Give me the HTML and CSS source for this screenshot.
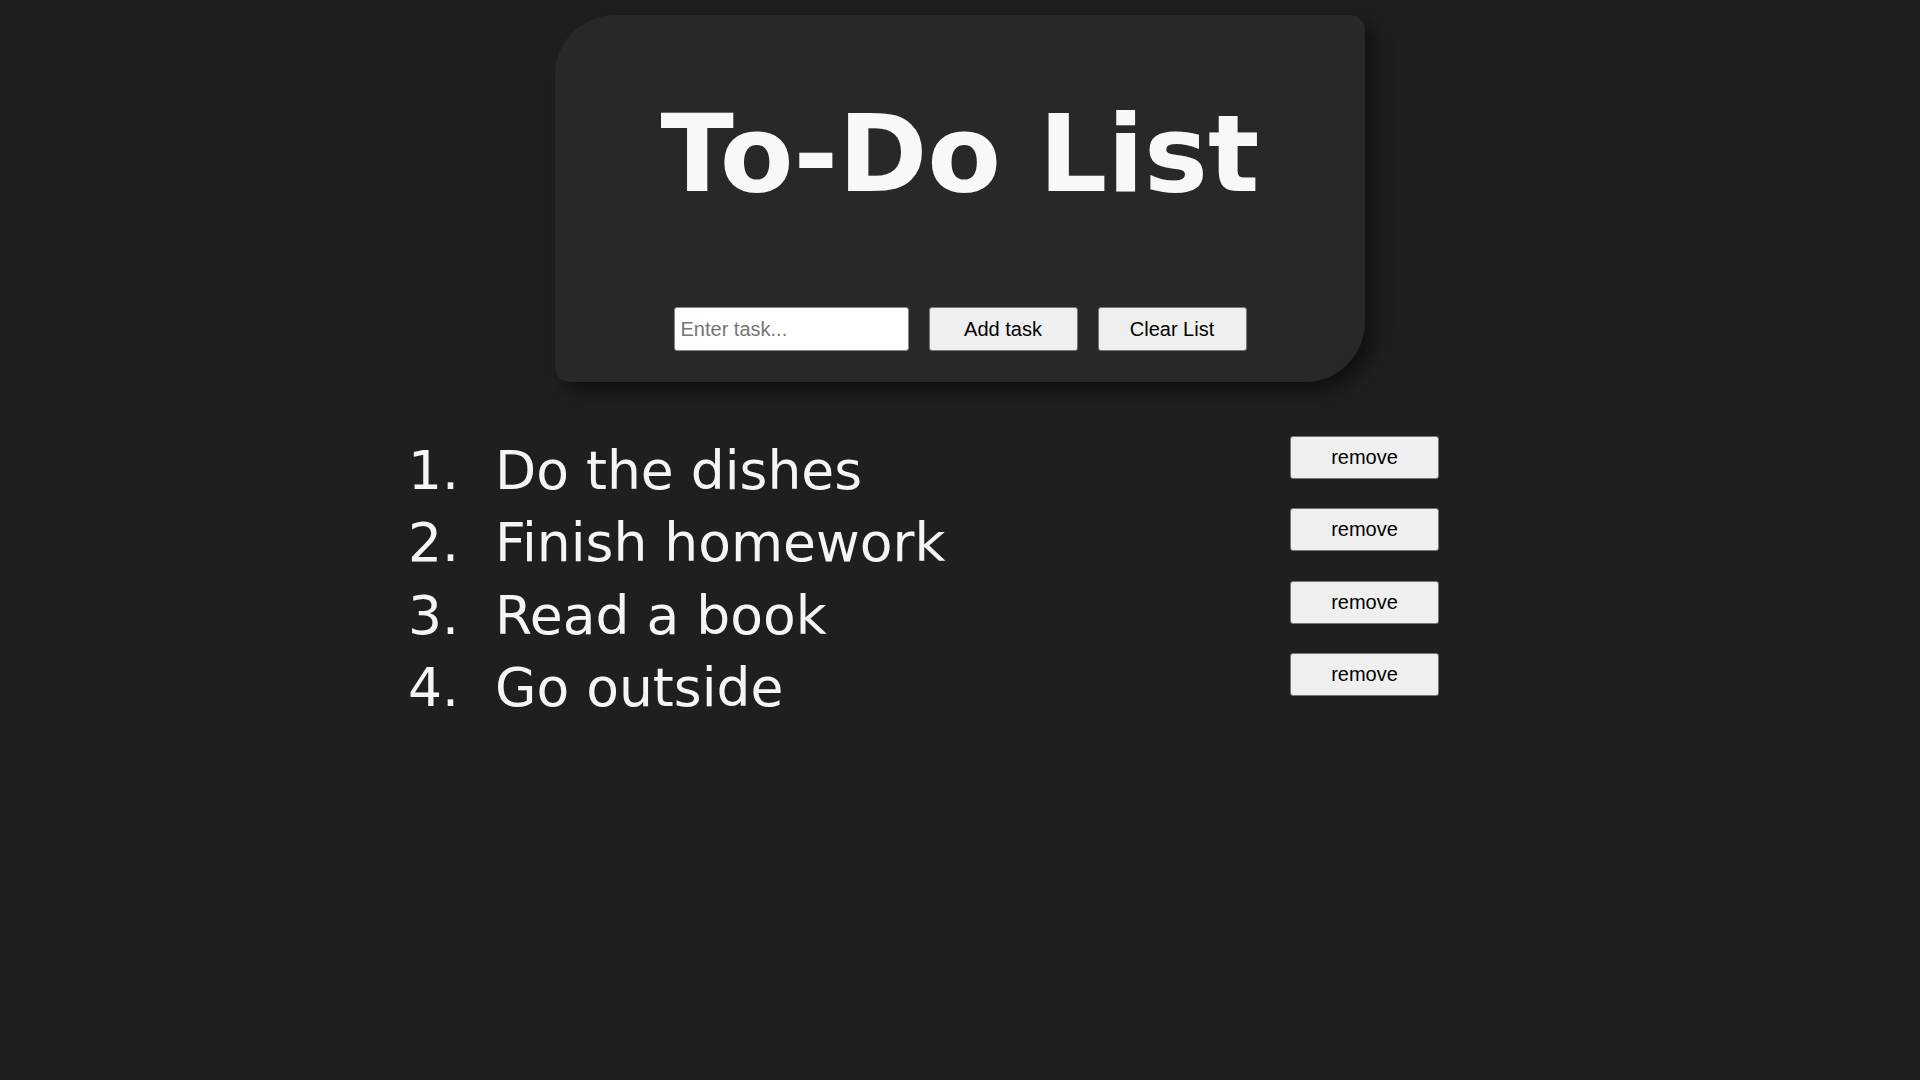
FILE: index.html
```html
<!DOCTYPE html>
<html lang="en">
<head>
<meta charset="utf-8">
<title>To-Do List</title>
<link rel="stylesheet" href="styles.css">
</head>
<body>
<main class="app">
  <section class="card">
    <h1 class="title">To-Do List</h1>
    <div class="controls">
      <input class="task-input" type="text" placeholder="Enter task...">
      <button class="btn">Add task</button>
      <button class="btn">Clear List</button>
    </div>
  </section>
  <ol class="tasks">
    <li class="task"><button class="btn remove">remove</button><span class="task-text">Do the dishes</span></li>
    <li class="task"><button class="btn remove">remove</button><span class="task-text">Finish homework</span></li>
    <li class="task"><button class="btn remove">remove</button><span class="task-text">Read a book</span></li>
    <li class="task"><button class="btn remove">remove</button><span class="task-text">Go outside</span></li>
  </ol>
</main>
</body>
</html>
```

FILE: styles.css
```css
html, body {
  margin: 0;
  padding: 0;
}

body {
  background: #1f1f1f;
  min-height: 1080px;
  font-family: "DejaVu Sans", Verdana, sans-serif;
}

.app {
  padding-top: 15px;
}

.card {
  box-sizing: border-box;
  width: 810px;
  height: 367px;
  margin: 0 auto;
  padding-top: 78px;
  background: #282828;
  border-radius: 60px 15px 60px 15px;
  box-shadow: 9px 9px 18px rgba(0, 0, 0, 0.5);
}

.title {
  margin: 0;
  font-family: "DejaVu Sans", Verdana, sans-serif;
  font-weight: bold;
  font-size: 107.5px;
  line-height: 121px;
  color: #f8f8f8;
  text-align: center;
  white-space: nowrap;
}

.controls {
  display: flex;
  justify-content: center;
  gap: 20px;
  margin-top: 93px;
}

.task-input {
  box-sizing: border-box;
  width: 235px;
  height: 44px;
  margin: 0;
  padding: 0 6px;
  background: #ffffff;
  border: 1px solid #858585;
  border-radius: 3px;
  font-family: "Liberation Sans", Arial, sans-serif;
  font-size: 20px;
  color: #000;
  outline: none;
}

.task-input::placeholder {
  color: #757575;
}

.btn {
  box-sizing: border-box;
  width: 149px;
  height: 44px;
  margin: 0;
  padding: 0;
  background: #efefef;
  border: 1px solid #767676;
  border-radius: 3px;
  font-family: "Liberation Sans", Arial, sans-serif;
  font-size: 20px;
  line-height: normal;
  color: #000;
}

.tasks {
  width: 963px;
  margin: 53px 0 0 calc(50% - 484px);
  padding: 0;
  color: #f5f5f5;
  font-family: "DejaVu Sans", Verdana, sans-serif;
  font-size: 53.5px;
}

.task {
  display: list-item;
  padding-left: 19px;
  line-height: 72.33px;
}

.task::after {
  content: "";
  display: block;
  clear: both;
}

.task::marker {
  color: #f5f5f5;
}

.remove {
  float: right;
  margin-top: 1px;
  height: 43px;
}
```
